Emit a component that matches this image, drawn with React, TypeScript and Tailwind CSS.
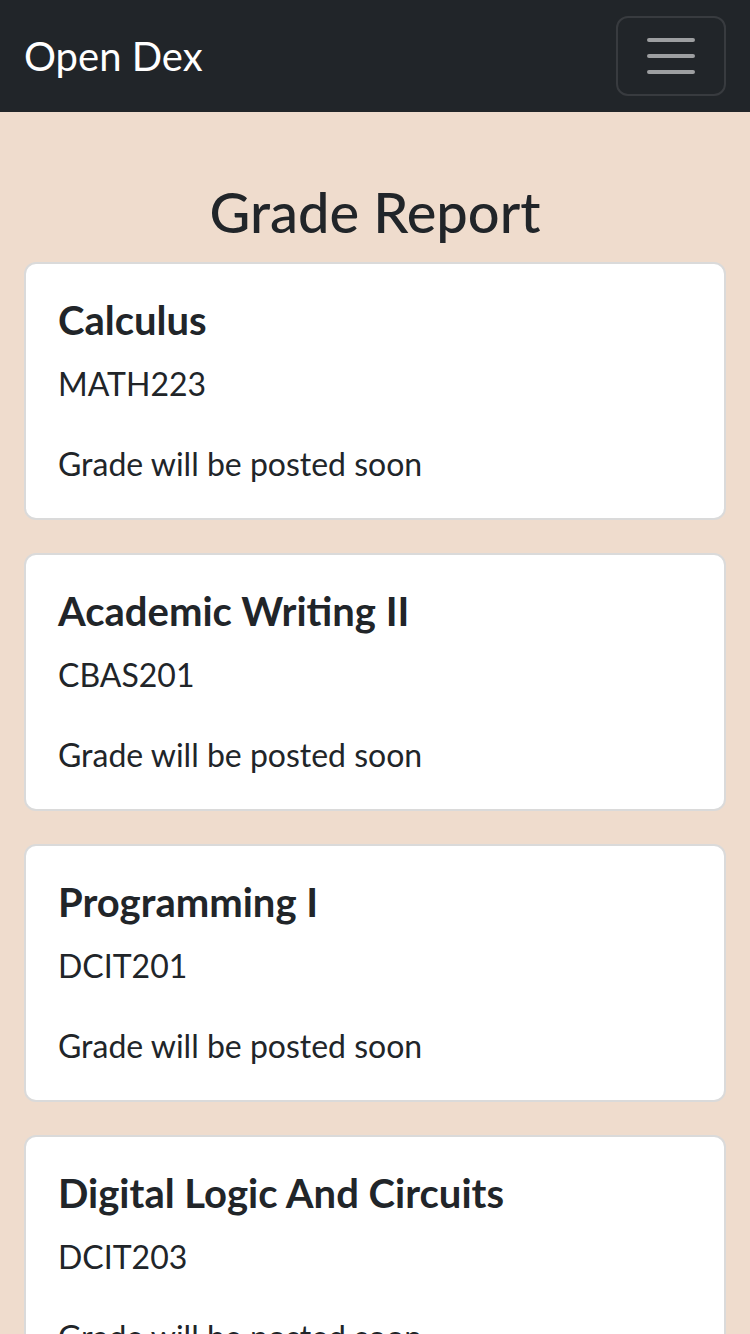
import React from 'react';

const courses = [
  { title: 'Calculus', code: 'MATH223' },
  { title: 'Academic Writing II', code: 'CBAS201' },
  { title: 'Programming I', code: 'DCIT201' },
  { title: 'Digital Logic And Circuits', code: 'DCIT203' },
];

const font = { fontFamily: '"Lato", "Noto Sans", "Liberation Sans", sans-serif' };

const App: React.FC = () => {
  return (
    <div className="min-h-screen bg-[#efdccd] text-[#212529]" style={font}>
      {/* navbar */}
      <nav className="bg-[#212529] h-[112px] px-6 flex items-center justify-between">
        <span className="text-white text-[40px] leading-[60px]">Open Dex</span>
        <button className="w-[110px] h-[80px] border-2 border-[#383b3f] rounded-xl flex items-center justify-center">
          <svg width="60" height="60" viewBox="0 0 30 30">
            <path
              d="M4 7h22M4 15h22M4 23h22"
              stroke="#9d9fa1"
              strokeWidth="2"
              strokeLinecap="round"
            />
          </svg>
        </button>
      </nav>

      <main className="px-6 pt-[66px]">
        <h1 className="text-center text-[56px] leading-[68px] font-medium mb-4">Grade Report</h1>

        <div className="flex flex-col gap-[33px]">
          {courses.map((c) => (
            <div key={c.code} className="bg-white border-2 border-[#dadada] rounded-xl px-8 pt-8 pb-[30px]">
              <h5 className="text-[40px] leading-[48px] font-bold mb-4">{c.title}</h5>
              <p className="text-[32px] leading-[48px] mb-8">{c.code}</p>
              <p className="text-[32px] leading-[48px]">Grade will be posted soon</p>
            </div>
          ))}
        </div>
      </main>
    </div>
  );
};

export default App;
